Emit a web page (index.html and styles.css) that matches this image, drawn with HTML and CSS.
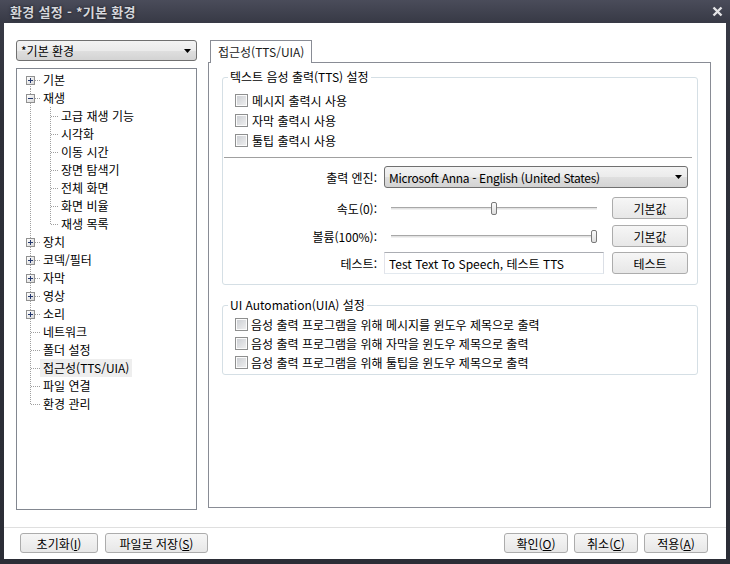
FILE: index.html
```html
<!DOCTYPE html>
<html lang="ko">
<head>
<meta charset="utf-8">
<title>환경 설정</title>
<link rel="stylesheet" href="styles.css">
</head>
<body>
<div class="window">
  <div class="titlebar">
    <span class="title">환경 설정 - *기본 환경</span>
    <svg class="close" width="11" height="11" viewBox="0 0 11 11"><path d="M1.5 1.5 L9.5 9.5 M9.5 1.5 L1.5 9.5" stroke="#e4e4e6" stroke-width="2.4"/></svg>
  </div>
  <div class="client">
    <div class="main">
      <div class="sidebar">
        <div class="combo profile"><span>*기본 환경</span><svg class="arrow" width="7" height="4" viewBox="0 0 7 4"><path d="M0 0h7L3.5 4z"/></svg></div>
        <div class="tree">
          <div class="row top first"><span class="exp"><svg width="7" height="7" viewBox="0 0 7 7"><path d="M1 3.5h5M3.5 1v5" stroke="#24386e"/></svg></span><span class="lbl">기본</span></div>
          <div class="row top"><span class="exp"><svg width="7" height="7" viewBox="0 0 7 7"><path d="M1 3.5h5" stroke="#24386e"/></svg></span><span class="lbl">재생</span></div>
          <div class="row child"><span class="lbl">고급 재생 기능</span></div>
          <div class="row child"><span class="lbl">시각화</span></div>
          <div class="row child"><span class="lbl">이동 시간</span></div>
          <div class="row child"><span class="lbl">장면 탐색기</span></div>
          <div class="row child"><span class="lbl">전체 화면</span></div>
          <div class="row child"><span class="lbl">화면 비율</span></div>
          <div class="row child last"><span class="lbl">재생 목록</span></div>
          <div class="row top"><span class="exp"><svg width="7" height="7" viewBox="0 0 7 7"><path d="M1 3.5h5M3.5 1v5" stroke="#24386e"/></svg></span><span class="lbl">장치</span></div>
          <div class="row top"><span class="exp"><svg width="7" height="7" viewBox="0 0 7 7"><path d="M1 3.5h5M3.5 1v5" stroke="#24386e"/></svg></span><span class="lbl">코덱/필터</span></div>
          <div class="row top"><span class="exp"><svg width="7" height="7" viewBox="0 0 7 7"><path d="M1 3.5h5M3.5 1v5" stroke="#24386e"/></svg></span><span class="lbl">자막</span></div>
          <div class="row top"><span class="exp"><svg width="7" height="7" viewBox="0 0 7 7"><path d="M1 3.5h5M3.5 1v5" stroke="#24386e"/></svg></span><span class="lbl">영상</span></div>
          <div class="row top"><span class="exp"><svg width="7" height="7" viewBox="0 0 7 7"><path d="M1 3.5h5M3.5 1v5" stroke="#24386e"/></svg></span><span class="lbl">소리</span></div>
          <div class="row leaf"><span class="lbl">네트워크</span></div>
          <div class="row leaf"><span class="lbl">폴더 설정</span></div>
          <div class="row leaf"><span class="lbl sel">접근성(TTS/UIA)</span></div>
          <div class="row leaf"><span class="lbl">파일 연결</span></div>
          <div class="row leaf last"><span class="lbl">환경 관리</span></div>
        </div>
      </div>
      <div class="content">
        <div class="tabs"><div class="tab">접근성(TTS/UIA)</div></div>
        <div class="panel">
          <fieldset class="group g1">
            <legend>텍스트 음성 출력(TTS) 설정</legend>
            <div class="inner">
              <div class="check"><span class="cb"></span>메시지 출력시 사용</div>
              <div class="check"><span class="cb"></span>자막 출력시 사용</div>
              <div class="check"><span class="cb"></span>툴팁 출력시 사용</div>
              <div class="sep"></div>
              <div class="frow engine">
                <span class="flabel">출력 엔진:</span>
                <div class="combo wide"><span class="latin">Microsoft Anna - English (United States)</span><svg class="arrow" width="7" height="4" viewBox="0 0 7 4"><path d="M0 0h7L3.5 4z"/></svg></div>
              </div>
              <div class="frow speed">
                <span class="flabel">속도(0):</span>
                <div class="slider"><div class="track"><span class="thumb" style="--pos:0.5"></span></div></div>
                <div class="btn side">기본값</div>
              </div>
              <div class="frow volume">
                <span class="flabel">볼륨(100%):</span>
                <div class="slider"><div class="track"><span class="thumb" style="--pos:1"></span></div></div>
                <div class="btn side">기본값</div>
              </div>
              <div class="frow test">
                <span class="flabel">테스트:</span>
                <div class="input">Test Text To Speech, 테스트 TTS</div>
                <div class="btn side">테스트</div>
              </div>
            </div>
          </fieldset>
          <fieldset class="group g2">
            <legend>UI Automation(UIA) 설정</legend>
            <div class="inner">
              <div class="check"><span class="cb"></span>음성 출력 프로그램을 위해 메시지를 윈도우 제목으로 출력</div>
              <div class="check"><span class="cb"></span>음성 출력 프로그램을 위해 자막을 윈도우 제목으로 출력</div>
              <div class="check"><span class="cb"></span>음성 출력 프로그램을 위해 툴팁을 윈도우 제목으로 출력</div>
            </div>
          </fieldset>
        </div>
      </div>
    </div>
    <div class="footer">
      <div class="btn w78">초기화(<u>I</u>)</div>
      <div class="btn w103">파일로 저장(<u>S</u>)</div>
      <div class="spacer"></div>
      <div class="btn w64">확인(<u>O</u>)</div>
      <div class="btn w64">취소(<u>C</u>)</div>
      <div class="btn w64">적용(<u>A</u>)</div>
    </div>
  </div>
</div>
</body>
</html>
```
FILE: styles.css
```css
* { box-sizing: border-box; }
html, body { margin: 0; padding: 0; }
body {
  width: 730px; height: 564px; overflow: hidden;
  background: #2c2e38;
  font-family: "Noto Sans CJK KR", "Noto Sans", sans-serif;
  font-size: 12px; color: #000;
}
.window {
  width: 730px; height: 564px;
  display: flex; flex-direction: column;
  background: linear-gradient(#3a3c48, #2e3039 120px, #2b2d36);
}
.titlebar {
  height: 23px; flex: none;
  display: flex; align-items: center; justify-content: space-between;
  padding: 0 7px 0 10px;
  background: linear-gradient(#4a4c5a, #373945);
}
.title {
  color: #d6d7dc; font-weight: bold; font-size: 13px; letter-spacing: 0.3px;
  text-shadow: 0 0 3px rgba(0,0,0,.7);
}
.close { display: block; }
.client {
  flex: 1; margin: 0 4px 5px;
  background: #fff;
  display: flex; flex-direction: column;
}
.main {
  flex: 1; display: flex; align-items: flex-start;
  padding: 17px 15px 0 12px; gap: 11px;
}
.sidebar { width: 181px; display: flex; flex-direction: column; gap: 7px; }
.combo {
  height: 21px;
  border: 1px solid #707070; border-radius: 3px;
  background: linear-gradient(#f3f3f3 0%, #ebebeb 50%, #dfdfdf 51%, #d3d3d3 100%);
  display: flex; align-items: center; justify-content: space-between;
  padding: 0 5px 0 4px;
  white-space: nowrap;
}
.arrow { display: block; }
.latin { letter-spacing: -0.3px; }
.tree {
  height: 442px;
  border: 1px solid #828790;
  padding-top: 2px;
  --v: repeating-linear-gradient(to bottom, #a0a0a0 0 1px, transparent 1px 2px);
  --h: repeating-linear-gradient(to right, #a0a0a0 0 1px, transparent 1px 2px);
}
.row {
  height: 18px; display: flex; align-items: center; white-space: nowrap;
  background-repeat: no-repeat;
}
.row.top {
  background-image: var(--v), var(--h);
  background-size: 1px 18px, 5px 1px;
  background-position: 13px 0, 18px 9px;
}
.row.top.first {
  background-size: 1px 9px, 5px 1px;
  background-position: 13px 9px, 18px 9px;
}
.row.child {
  background-image: var(--v), var(--v), var(--h);
  background-size: 1px 18px, 1px 18px, 8px 1px;
  background-position: 13px 0, 33px 0, 34px 9px;
}
.row.child.last { background-size: 1px 18px, 1px 10px, 8px 1px; }
.row.leaf {
  background-image: var(--v), var(--h);
  background-size: 1px 18px, 9px 1px;
  background-position: 13px 0, 14px 9px;
}
.row.leaf.last { background-size: 1px 10px, 9px 1px; }
.exp {
  width: 9px; height: 9px; margin-left: 9px;
  border: 1px solid #919191;
  background: linear-gradient(135deg, #ffffff, #d8d8d8);
  display: flex; align-items: center; justify-content: center;
}
.exp svg { display: block; shape-rendering: crispEdges; }
.lbl { padding: 0 3px; height: 18px; line-height: 18px; }
.row.top .lbl { margin-left: 5px; }
.row.leaf .lbl { margin-left: 23px; }
.row.child .lbl { margin-left: 41px; }
.lbl.sel { background: #eeeeee; }

.content { width: 503px; display: flex; flex-direction: column; }
.tabs { height: 22px; display: flex; align-items: flex-start; padding-left: 2px; }
.tab {
  height: 23px; position: relative; z-index: 1;
  border: 1px solid #898c95; border-bottom: none;
  background: #fff; padding: 0 7px; line-height: 21px;
  color: #1a1a1a;
}
.panel {
  height: 446px;
  border: 1px solid #898c95;
  padding: 6px 12px 0 13px;
}
fieldset.group {
  margin: 0; padding: 0; min-width: 0;
  border: 1px solid #d5dfe5; border-radius: 3px;
}
legend { margin-left: 5px; padding: 0 2px; line-height: 16px; }
.g1 .inner { padding: 5px 9px 10px 1px; }
fieldset.g2 { margin-top: 12px; }
.g2 .inner { padding: 2px 0 2px 12px; }
.check { display: flex; align-items: center; height: 20px; white-space: nowrap; }
.g1 .check { padding-left: 11px; }
.g2 .check { height: 19px; }
.cb {
  width: 13px; height: 13px; margin-right: 4px; flex: none;
  border: 1px solid #8e8f8f;
  background: linear-gradient(135deg, #c9ccd1, #f1f1f1);
  box-shadow: inset 0 0 0 1px #fbfbfb;
}
.g2 .cb { margin-right: 3px; }
.sep { border-top: 1px solid #a0a0a0; margin: 7px -4px 0 0; }
.frow { display: flex; align-items: center; height: 22px; }
.engine { margin-top: 8px; }
.speed { margin-top: 9px; }
.volume { margin-top: 6px; }
.test { margin-top: 5px; }
.flabel { width: 153px; margin-right: 7px; text-align: right; white-space: nowrap; }
.combo.wide { width: 304px; height: 22px; }
.slider { width: 220px; height: 22px; padding: 0 7px; display: flex; align-items: center; }
.track {
  flex: 1; height: 3px; position: relative;
  border-top: 1px solid #a8a8a8; border-bottom: 1px solid #f0f0f0;
  background: #e2e2e2;
}
.thumb {
  position: absolute; top: -6px;
  left: calc((100% - 6px) * var(--pos));
  width: 6px; height: 13px;
  border: 1px solid #7a7a7a; border-radius: 2px;
  background: linear-gradient(#fafafa, #dedede);
}
.input {
  width: 220px; height: 22px;
  border: 1px solid; border-color: #abadb3 #dbdfe6 #e3e9ef #e2e3ea;
  padding-left: 4px; display: flex; align-items: center; white-space: nowrap;
}
.btn {
  height: 22px;
  border: 1px solid #acacac; border-radius: 3px;
  background: linear-gradient(#f6f6f6, #e7e7e7);
  display: flex; align-items: center; justify-content: center;
  white-space: nowrap;
}
.btn.side { width: 76px; margin-left: 8px; }
.footer {
  height: 32px; flex: none;
  border-top: 1px solid #dfdfdf;
  display: flex; align-items: flex-start;
  padding: 5px 18px 0 16px; gap: 7px;
}
.footer .btn { height: 20px; }
.footer .spacer { flex: 1; }
.footer .w64 + .w64 { margin-left: -1px; }
.w78 { width: 78px; }
.w103 { width: 103px; }
.w64 { width: 64px; }
u { text-decoration: underline; text-underline-offset: 1px; }
```
